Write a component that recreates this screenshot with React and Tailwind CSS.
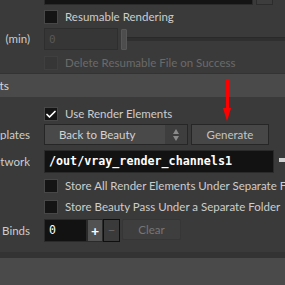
import { Check } from 'lucide-react'

function Label({ text }) {
  return (
    <div className="w-[30px] shrink-0 overflow-hidden flex justify-end whitespace-pre">
      <span>{text}</span>
    </div>
  )
}

function Checkbox({ checked = false, disabled = false }) {
  return (
    <div
      className={
        disabled
          ? 'w-[14px] h-[14px] shrink-0 border border-[#3f3f3f] bg-[#363636]'
          : 'w-[14px] h-[14px] shrink-0 border border-[#474747] bg-[#141414] flex items-center justify-center'
      }
    >
      {checked && <Check className="w-[13px] h-[13px] text-white" strokeWidth={3.5} />}
    </div>
  )
}

function CheckRow({ text, checked, disabled }) {
  return (
    <div className="flex items-center h-[14px] pl-[44px] whitespace-nowrap">
      <Checkbox checked={checked} disabled={disabled} />
      <span className={disabled ? 'ml-[7px] text-[#6a6a6a]' : 'ml-[7px]'}>{text}</span>
    </div>
  )
}

export default function App() {
  return (
    <div className="relative w-[285px] h-[285px] overflow-hidden bg-[#3a3a3a] text-[#cdcdcd] text-[11.5px] leading-none font-['Lato',sans-serif]">
      <div className="flex flex-col">
        {/* bottom of the field above */}
        <div className="flex h-[5px] pl-[44px]">
          <div className="w-[209px] h-full bg-[#141414] border-x border-b border-[#2b2b2b]" />
          <div className="ml-[3px] w-[17px] h-full border-x border-b border-[#2c2c2c] bg-[#3d3d3d]" />
        </div>

        <div className="mt-[5px]">
          <CheckRow text="Resumable Rendering" />
        </div>

        {/* interval row */}
        <div className="mt-[4px] flex items-center h-[22px]">
          <Label text="Interval   (min)" />
          <div className="ml-[14px] w-[74px] h-full bg-[#363636] border border-[#2e2e2e] flex items-center pl-[4px] font-['DejaVu_Sans_Mono',monospace] text-[11px] text-[#585858]">
            0
          </div>
          <div className="ml-[3px] w-[6px] h-[21px] bg-[#4d4d4d] border border-[#575757] rounded-[1px]" />
          <div className="flex-1 h-[4px] bg-[#2f2f2f] border-t border-[#292929]" />
        </div>

        <div className="mt-[6px]">
          <CheckRow text="Delete Resumable File on Success" disabled />
        </div>

        {/* section header */}
        <div className="mt-[3px] h-[24px] bg-[#4a4a4a] border-t border-[#333333] flex items-center">
          <div className="w-[9px] overflow-hidden flex justify-end whitespace-nowrap text-[#d6d6d6] text-[12px]">
            <span>Render Elements</span>
          </div>
        </div>

        <div className="mt-[10px]">
          <CheckRow text="Use Render Elements" checked />
        </div>

        {/* templates row */}
        <div className="mt-[3px] flex items-center h-[21px]">
          <Label text="Render Element Templates" />
          <div className="ml-[14px] w-[144px] h-full flex border border-[#262626] bg-[#494949]">
            <div className="flex-1 flex items-center pl-[14px] text-[#d2d2d2]">Back to Beauty</div>
            <div className="w-[22px] h-full bg-[#3e3e3e] flex flex-col items-center justify-center gap-[2px]">
              <div className="w-0 h-0 border-x-[3.5px] border-x-transparent border-b-[5px] border-b-[#8a8a8a]" />
              <div className="w-0 h-0 border-x-[3.5px] border-x-transparent border-t-[5px] border-t-[#8a8a8a]" />
            </div>
          </div>
          <div className="ml-[3px] w-[78px] h-full flex items-center justify-center border border-[#262626] bg-[#474747] text-[#c4c4c4]">
            Generate
          </div>
        </div>

        {/* network row */}
        <div className="mt-[5px] flex items-center h-[23px]">
          <Label text="Render Elements Network" />
          <div className="ml-[14px] w-[232px] h-full bg-[#121212] border border-[#2a2a2a] flex items-center pl-[4px] font-['DejaVu_Sans_Mono',monospace] font-bold text-[11.7px] text-white whitespace-nowrap">
            /out/vray_render_channels1
          </div>
          <div className="ml-[5px] w-[6px] h-[4px] bg-[#d0d0d0] mb-[3px]" />
        </div>

        <div className="mt-[6px]">
          <CheckRow text="Store All Render Elements Under Separate Folders" />
        </div>
        <div className="mt-[7px]">
          <CheckRow text="Store Beauty Pass Under a Separate Folder" />
        </div>

        {/* binds row */}
        <div className="mt-[5px] flex items-center h-[23px]">
          <Label text="Channel Binds" />
          <div className="ml-[14px] w-[43px] h-full bg-[#121212] border border-[#2a2a2a] flex items-center pl-[4px] font-['DejaVu_Sans_Mono',monospace] text-[11.5px] text-white">
            0
          </div>
          <div className="w-[16px] h-full bg-[#525252] border border-[#2a2a2a] flex items-center justify-center text-white font-bold text-[14px]">+</div>
          <div className="w-[17px] h-full bg-[#3a3a3a] border border-[#0f0f0f] flex items-center justify-center text-[#626262] text-[13px]">−</div>
          <div className="ml-[2px] w-[59px] h-[21px] self-start bg-[#3e3e3e] border border-[#363636] rounded-[2px] flex items-center justify-center text-[#767676]">
            Clear
          </div>
        </div>

        <div className="mt-[10px] h-[6px] bg-[#333333]" />
        <div className="h-[27px] bg-[#4a4a4a]" />
      </div>

      {/* red annotation arrow */}
      <div className="absolute left-[226px] top-[79px] w-[3px] h-[32px] bg-[#ff0000]" />
      <div className="absolute left-[223px] top-[108px] w-0 h-0 border-x-[4.5px] border-x-transparent border-t-[13px] border-t-[#ff0000]" />
    </div>
  )
}
